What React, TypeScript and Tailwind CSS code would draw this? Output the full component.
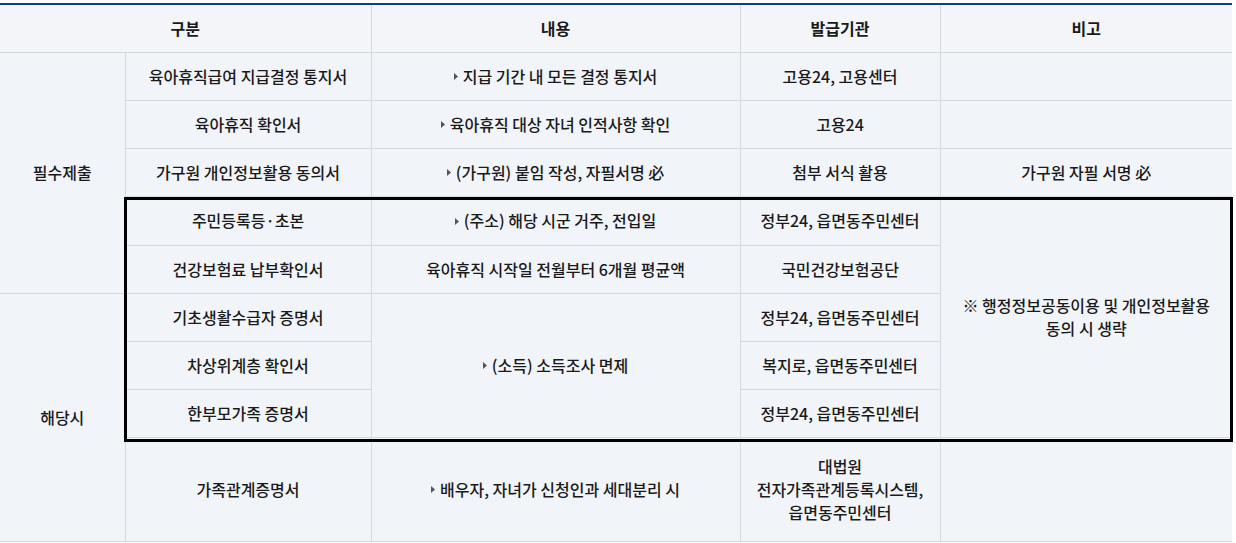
const td = "border border-[#d5d8dd] text-center align-middle px-2";

function Tri() {
  return (
    <svg width="4" height="7" viewBox="0 0 4 7" className="inline-block mr-[5px] mb-[3px]">
      <path d="M0 0 L4 3.5 L0 7 Z" fill="#555" />
    </svg>
  );
}

export default function App() {
  return (
    <div className="bg-white w-[1236px] h-[543px] pt-[3px]" style={{ fontFamily: '"Noto Sans CJK KR", "Noto Sans", sans-serif' }}>
      <div className="relative w-[1232px]">
        <table className="w-full border-collapse table-fixed text-[16px] font-medium text-[#1a1a1a] leading-[23px] border-t-2 border-t-[#0e3c7d]">
          <colgroup>
            <col className="w-[125px]" />
            <col className="w-[246px]" />
            <col className="w-[369px]" />
            <col className="w-[200px]" />
            <col />
          </colgroup>
          <thead>
            <tr className="h-[48px] bg-[#f4f5f8]">
              <th colSpan={2} className={td + " border-l-0 border-t-0 font-bold"}>구분</th>
              <th className={td + " border-t-0 font-bold"}>내용</th>
              <th className={td + " border-t-0 font-bold"}>발급기관</th>
              <th className={td + " border-t-0 border-r-0 font-bold"}>비고</th>
            </tr>
          </thead>
          <tbody className="bg-[#f1f4f8]">
            <tr className="h-[48px]">
              <td rowSpan={5} className={td + " border-l-0"}>필수제출</td>
              <td className={td}>육아휴직급여 지급결정 통지서</td>
              <td className={td}><Tri />지급 기간 내 모든 결정 통지서</td>
              <td className={td}>고용24, 고용센터</td>
              <td className={td + " border-r-0"}></td>
            </tr>
            <tr className="h-[48px]">
              <td className={td}>육아휴직 확인서</td>
              <td className={td}><Tri />육아휴직 대상 자녀 인적사항 확인</td>
              <td className={td}>고용24</td>
              <td className={td + " border-r-0"}></td>
            </tr>
            <tr className="h-[48px]">
              <td className={td}>가구원 개인정보활용 동의서</td>
              <td className={td}><Tri />(가구원) 붙임 작성, 자필서명 必</td>
              <td className={td}>첨부 서식 활용</td>
              <td className={td + " border-r-0"}>가구원 자필 서명 必</td>
            </tr>
            <tr className="h-[49px]">
              <td className={td}>주민등록등·초본</td>
              <td className={td}><Tri />(주소) 해당 시군 거주, 전입일</td>
              <td className={td}>정부24, 읍면동주민센터</td>
              <td rowSpan={5} className={td + " border-r-0"}>
                ※ 행정정보공동이용 및 개인정보활용
                <br />
                동의 시 생략
              </td>
            </tr>
            <tr className="h-[48px]">
              <td className={td}>건강보험료 납부확인서</td>
              <td className={td}>육아휴직 시작일 전월부터 6개월 평균액</td>
              <td className={td}>국민건강보험공단</td>
            </tr>
            <tr className="h-[48px]">
              <td rowSpan={4} className={td + " border-l-0"}>해당시</td>
              <td className={td}>기초생활수급자 증명서</td>
              <td rowSpan={3} className={td}><Tri />(소득) 소득조사 면제</td>
              <td className={td}>정부24, 읍면동주민센터</td>
            </tr>
            <tr className="h-[48px]">
              <td className={td}>차상위계층 확인서</td>
              <td className={td}>복지로, 읍면동주민센터</td>
            </tr>
            <tr className="h-[48px]">
              <td className={td}>한부모가족 증명서</td>
              <td className={td}>정부24, 읍면동주민센터</td>
            </tr>
            <tr className="h-[104px]">
              <td className={td}>가족관계증명서</td>
              <td className={td}><Tri />배우자, 자녀가 신청인과 세대분리 시</td>
              <td className={td}>
                대법원
                <br />
                전자가족관계등록시스템,
                <br />
                읍면동주민센터
              </td>
              <td className={td + " border-r-0"}></td>
            </tr>
          </tbody>
        </table>
        <div className="absolute left-[124px] top-[194px] w-[1109px] h-[245px] border-[3px] border-black pointer-events-none" />
      </div>
    </div>
  );
}
